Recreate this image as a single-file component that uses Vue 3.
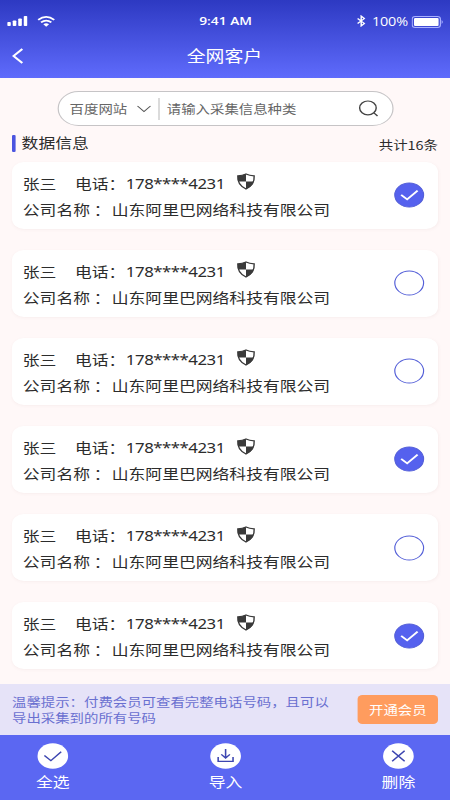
<script setup>
import { ref } from 'vue'

const customers = ref(
  [true, false, false, true, false, true].map((checked, i) => ({
    id: i,
    name: '张三',
    phone: '178****4231',
    company: '山东阿里巴网络科技有限公司',
    checked,
  })),
)
</script>

<template>
  <div class="screen">
    <header class="top">
      <div class="status">
        <div class="side">
          <svg class="signal" width="17" height="10" viewBox="0 0 17 10">
            <rect x="0" y="6" width="3" height="4" rx="0.8" />
            <rect x="4.6" y="4.5" width="3" height="5.5" rx="0.8" />
            <rect x="9.2" y="2.5" width="3" height="7.5" rx="0.8" />
            <rect x="13.8" y="0" width="3" height="10" rx="0.8" />
          </svg>
          <svg class="wifi" width="15" height="11" viewBox="0 0 15 11">
            <path d="M0.8 3.8Q7.5-1.9 14.2 3.8M3.2 6.4Q7.5 2.8 11.8 6.4" />
            <path class="dot" d="M5.1 8.2Q7.5 6.3 9.9 8.2L7.5 10.7Z" />
          </svg>
        </div>
        <div class="time">9:41 AM</div>
        <div class="side end">
          <svg class="bluetooth" width="8" height="12" viewBox="0 0 8 12">
            <path d="M1 3.5L6.6 8.4L4 10.9V1.1L6.6 3.6L1 8.5" />
          </svg>
          <span class="percent">100%</span>
          <svg class="battery" width="27" height="12" viewBox="0 0 27 12">
            <rect class="shell" x="0.5" y="0.5" width="23.5" height="11" rx="2.5" />
            <rect class="charge" x="2" y="2" width="20.5" height="8" rx="1" />
            <path class="tip" d="M25 4Q27 6 25 8Z" />
          </svg>
        </div>
      </div>
      <div class="nav">
        <svg class="back" width="10" height="16" viewBox="0 0 10 16">
          <path d="M8.6 1L1.2 8L8.6 15" />
        </svg>
        <h1>全网客户</h1>
      </div>
    </header>

    <main>
      <div class="search">
        <span class="source">百度网站</span>
        <svg class="caret" width="12" height="8" viewBox="0 0 12 8">
          <path d="M0.6 1L6 6.6L11.4 1" />
        </svg>
        <i class="divider"></i>
        <span class="hint">请输入采集信息种类</span>
        <svg class="lens" width="17" height="17" viewBox="0 0 17 17">
          <circle cx="7.6" cy="7.9" r="6.9" />
          <path d="M12.6 12.8L15.6 16" />
        </svg>
      </div>

      <div class="section">
        <i class="marker"></i>
        <h2>数据信息</h2>
        <span class="count">共计16条</span>
      </div>

      <div class="list">
        <article v-for="c in customers" :key="c.id" class="card">
          <div class="info">
            <div class="line">
              <span class="name">{{ c.name }}</span>
              <span>电话：</span>
              <span class="phone">{{ c.phone }}</span>
              <svg class="shield" width="16" height="17" viewBox="0 0 16 17">
                <path class="outline" d="M8 1Q10.8 2.6 14.8 2.9Q15.4 12 8 16Q0.6 12 1.2 2.9Q5.2 2.6 8 1Z" />
                <path class="fill" d="M8 1V8.5H1.5Q1 5.5 1.2 2.9Q5.2 2.6 8 1ZM8 8.5H14.5Q13.4 13 8 16Z" />
              </svg>
            </div>
            <div class="line company"><span>公司名称 ：</span><span>{{ c.company }}</span></div>
          </div>
          <svg class="check" :class="{ on: c.checked }" width="26" height="26" viewBox="0 0 26 26" @click="c.checked = !c.checked">
            <circle cx="13" cy="13" r="12" />
            <path v-if="c.checked" d="M6.3 12.8L11.3 17.4L20 8.6" />
          </svg>
        </article>
      </div>
    </main>

    <aside class="notice">
      <p>温馨提示：付费会员可查看完整电话号码，且可以导出采集到的所有号码</p>
      <button>开通会员</button>
    </aside>

    <footer class="tabs">
      <div class="tab">
        <svg width="26" height="26" viewBox="0 0 26 26">
          <circle cx="13" cy="13" r="12.8" />
          <path d="M6 12.5L11.4 17.6L20 8.8" />
        </svg>
        <span>全选</span>
      </div>
      <div class="tab">
        <svg width="26" height="26" viewBox="0 0 26 26">
          <circle cx="13" cy="13" r="12.8" />
          <path d="M13 6V14.6M9.4 11.4L13 15L16.6 11.4M6.8 14V18.4H19.2V14" />
        </svg>
        <span>导入</span>
      </div>
      <div class="tab">
        <svg width="26" height="26" viewBox="0 0 26 26">
          <circle cx="13" cy="13" r="12.8" />
          <path d="M7.8 7.8L18.2 18.2M18.2 7.8L7.8 18.2" />
        </svg>
        <span>删除</span>
      </div>
    </footer>
  </div>
</template>

<style>
body {
  margin: 0;
  overflow: hidden;
  background: #fff8f8;
}
</style>

<style scoped>
.screen {
  width: 375px;
  height: 800px;
  display: flex;
  flex-direction: column;
  transform: scaleX(1.2);
  transform-origin: 0 0;
  background: #fff8f8;
  color: #2c2c2c;
  font-family: 'Noto Sans CJK SC', sans-serif;
  font-size: 14px;
  box-sizing: border-box;
}
svg {
  display: block;
  flex: none;
  fill: none;
}
h1,
h2,
p {
  margin: 0;
  font-weight: 400;
}
.top {
  height: 78px;
  flex: none;
  background: linear-gradient(#2d39c2, #5f6bfc);
  color: #fff;
}
.status {
  height: 40px;
  display: flex;
  align-items: center;
  padding: 2px 5px 0 6px;
  box-sizing: border-box;
}
.side {
  flex: 1;
  display: flex;
  align-items: center;
}
.end {
  justify-content: flex-end;
}
.signal {
  fill: #fff;
}
.wifi {
  margin-left: 8px;
  stroke: #fff;
  stroke-width: 1.7;
}
.wifi .dot {
  fill: #fff;
  stroke: none;
}
.time {
  font: 600 11.5px/20px 'Open Sans', sans-serif;
}
.bluetooth {
  stroke: #fff;
  stroke-width: 1.2;
}
.percent {
  font: 12px/20px 'Open Sans', sans-serif;
  letter-spacing: -0.1px;
  margin: 2px 3px 0 5px;
}
.battery {
  margin-top: 2px;
}
.battery .shell {
  stroke: #a9b0ff;
}
.battery .charge {
  fill: #fff;
}
.battery .tip {
  fill: #a9b0ff;
}
.nav {
  height: 31px;
  display: grid;
  grid-template-columns: 20px 1fr 20px;
  align-items: center;
  padding: 0 11px 0 10px;
}
.back {
  stroke: #fff;
  stroke-width: 1.8;
}
h1 {
  font-size: 15.7px;
  line-height: 32px;
  text-align: center;
}
main {
  flex: 1;
  min-height: 0;
  padding: 13px 10px 0;
}
.search {
  width: 280px;
  height: 35px;
  margin: 0 auto 0 38px;
  box-sizing: border-box;
  display: flex;
  align-items: center;
  padding: 0 11px 0 9px;
  border: 1px solid #c6c4c6;
  border-radius: 18px;
  background: #fff;
  color: #666;
  font-size: 12px;
}
.caret {
  margin-left: 8px;
  stroke: #555;
}
.divider {
  width: 1px;
  height: 22px;
  margin: 0 6px;
  background: #c4c4c4;
}
.lens {
  margin-left: auto;
  stroke: #444;
  stroke-width: 1.2;
}
.section {
  display: flex;
  align-items: center;
  height: 35.5px;
}
.marker {
  width: 3px;
  height: 17px;
  border-radius: 1px;
  background: #4b55e0;
}
h2 {
  font-size: 14px;
  margin: -3px 0 0 5px;
}
.count {
  margin: 1px 0 0 auto;
  font-size: 12px;
}
.list {
  display: grid;
  gap: 21.2px;
}
.card {
  height: 67px;
  box-sizing: border-box;
  padding: 8px 10.6px 0 9px;
  display: flex;
  background: #fff;
  border-radius: 10px;
  box-shadow: 0 1px 3px rgba(120, 60, 60, 0.05);
}
.info {
  flex: 1;
}
.line {
  display: flex;
  align-items: center;
  height: 26px;
  line-height: 26px;
  white-space: pre;
}
.company {
  gap: 1px;
}
.name {
  margin-right: 15.5px;
}
.phone {
  font-family: 'Noto Sans', sans-serif;
  letter-spacing: -0.4px;
  margin: 2px 0 0 0.4px;
}
.shield {
  margin: -2px 0 0 10px;
}
.shield .outline {
  stroke: #3a3a3a;
  stroke-width: 1.2;
}
.shield .fill {
  fill: #3a3a3a;
}
.check {
  margin-top: 12.4px;
}
.check circle {
  stroke: #5560d8;
  stroke-width: 1;
}
.check.on circle {
  fill: #5561ee;
}
.check.on path {
  stroke: #fff;
  stroke-width: 1.7;
}
.notice {
  height: 51px;
  flex: none;
  display: flex;
  justify-content: space-between;
  align-items: center;
  padding: 0 10px;
  background: #e6e3f8;
}
.notice p {
  width: 265px;
  font-size: 12px;
  line-height: 16px;
  color: #6a70d0;
}
.notice button {
  width: 67px;
  height: 29px;
  padding: 0;
  border: 0;
  border-radius: 4px;
  background: #ff9c5e;
  color: #fff;
  font: inherit;
  font-size: 12px;
}
.tabs {
  height: 65px;
  flex: none;
  box-sizing: border-box;
  display: flex;
  justify-content: space-between;
  padding: 8px 29px 0 30px;
  background: #5b67f2;
  color: #fff;
}
.tab {
  display: flex;
  flex-direction: column;
  align-items: center;
}
.tab span {
  line-height: 24px;
}
.tab circle {
  fill: #fff;
}
.tab path {
  stroke: #3c45b0;
  stroke-width: 1.3;
}
</style>
